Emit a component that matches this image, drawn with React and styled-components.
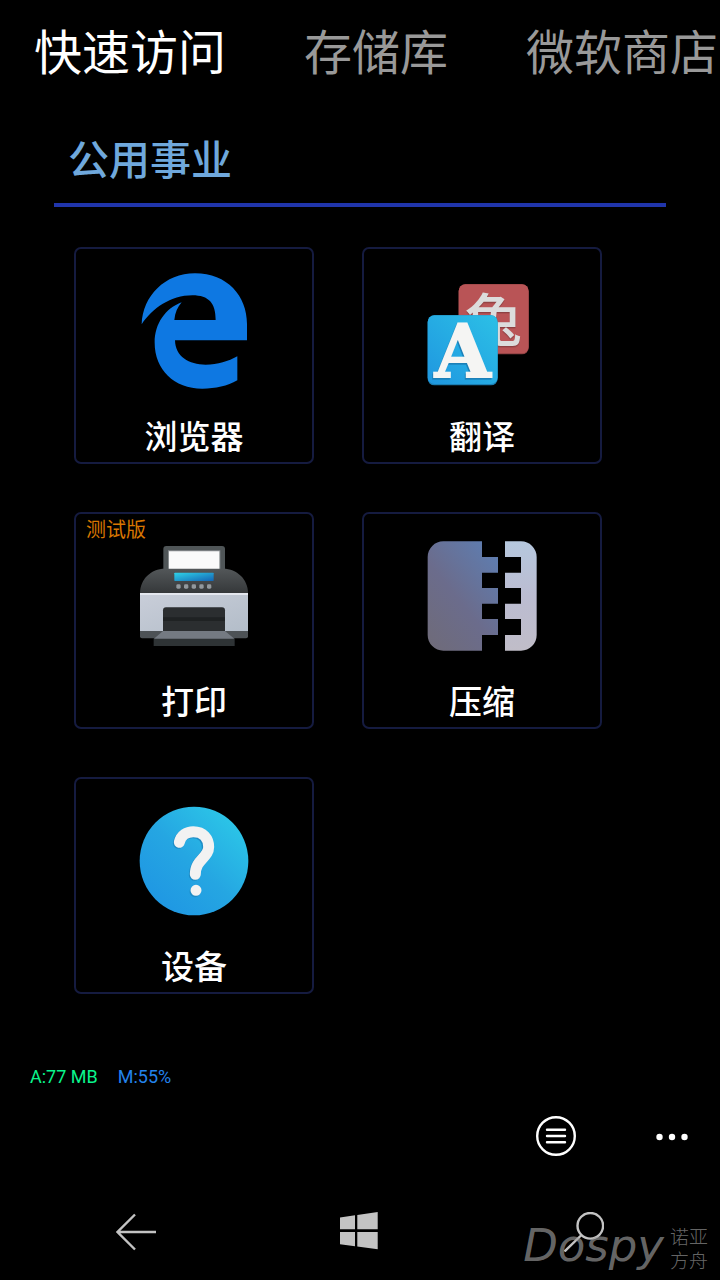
import React from "react";
import styled, { createGlobalStyle } from "styled-components";

const tabs = ["快速访问", "存储库", "微软商店"];

const tiles = [
  { label: "浏览器", icon: BrowserIcon },
  { label: "翻译", icon: TranslateIcon },
  { label: "打印", icon: PrinterIcon, badge: "测试版" },
  { label: "压缩", icon: ZipIcon },
  { label: "设备", icon: HelpIcon },
];

export default function App() {
  return (
    <Page>
      <GlobalStyle />
      <Tabs>
        {tabs.map((tab, i) => (
          <Tab key={tab} type="button" $active={i === 0}>
            {tab}
          </Tab>
        ))}
      </Tabs>
      <Section>
        <SectionTitle>公用事业</SectionTitle>
        <TileGrid>
          {tiles.map(({ label, icon: Icon, badge }) => (
            <Tile key={label} type="button">
              {badge && <Badge>{badge}</Badge>}
              <Icon />
              <TileLabel>{label}</TileLabel>
            </Tile>
          ))}
        </TileGrid>
      </Section>
      <Footer>
        <Stats>
          <Stat $color="#0af58c">A:77 MB</Stat>
          <Stat $color="#2383ec">M:55%</Stat>
        </Stats>
        <AppBar>
          <IconButton type="button" aria-label="菜单">
            <svg width="40" height="40" viewBox="0 0 40 40" fill="none" stroke="#fff">
              <circle cx="20" cy="20" r="18.8" strokeWidth="2.4" />
              <path d="M11 13.700H29M11 20H29M11 26.300H29" strokeWidth="2.4" strokeLinecap="round" />
            </svg>
          </IconButton>
          <IconButton type="button" aria-label="更多">
            <svg width="40" height="40" viewBox="0 0 40 40" fill="#fff">
              <circle cx="7.5" cy="21" r="3.2" />
              <circle cx="20" cy="21" r="3.2" />
              <circle cx="32.5" cy="21" r="3.2" />
            </svg>
          </IconButton>
        </AppBar>
        <NavBar>
          <IconButton type="button" aria-label="返回">
            <svg width="40" height="40" viewBox="0 0 40 40" fill="none" stroke="#c3c3c3" strokeWidth="2.4">
              <path d="M40 20H2M19 2.500L1.500 20L19 37.500" />
            </svg>
          </IconButton>
          <IconButton type="button" aria-label="开始">
            <svg width="40" height="40" viewBox="0 0 40 40" fill="#c3c3c3">
              <path d="M0 5.500L15 3.200V17.300H0ZM17.300 3L37.700 0V17.300H17.300ZM0 20H15V34.300L0 32.200ZM17.300 20H37.700V37.300L17.300 34.600Z" />
            </svg>
          </IconButton>
          <IconButton type="button" aria-label="搜索">
            <svg width="40" height="40" viewBox="0 0 40 40" fill="none" stroke="#c3c3c3" strokeWidth="2.400">
              <circle cx="26.300" cy="13.800" r="12.800" />
              <path d="M17.500 23L0.500 39.500" />
            </svg>
          </IconButton>
        </NavBar>
        <Watermark>
          <Brand>Dospy</Brand>
          <BrandSub>
            <span>诺亚</span>
            <span>方舟</span>
          </BrandSub>
        </Watermark>
      </Footer>
    </Page>
  );
}

// Tile icons share one 360 unit canvas
function BrowserIcon() {
  return (
    <TileIcon viewBox="210 81 360 360" aria-hidden="true">
      <path
        fill="#0e78e2"
        d="M233 253C236 168 303 100 393 100C490 100 549 168 549 252V301H333C334 350 375 374 425 374C462 374 493 364 520 349V421C490 438 455 446 415 446C330 446 272 388 272 308C272 250 305 205 353 187C341 201 333 218 331 240H455C455 190 435 166 385 166C320 166 265 205 233 253Z"
      />
    </TileIcon>
  );
}

function TranslateIcon() {
  return (
    <TileIcon viewBox="210 81 360 360" aria-hidden="true">
      <defs>
        <linearGradient id="trBlue" x1="0" y1="1" x2="1" y2="0">
          <stop offset="0" stopColor="#1f97e0" />
          <stop offset="1" stopColor="#2cc0e6" />
        </linearGradient>
      </defs>
      <rect x="320" y="133" width="210" height="210" rx="20" fill="#8e4143" />
      <rect x="320" y="133" width="210" height="207" rx="20" fill="#b95456" />
      <Hanzi x="424" y="303">兔</Hanzi>
      <rect x="227" y="226" width="210" height="210" rx="20" fill="#1b7fb4" />
      <rect x="227" y="226" width="210" height="206" rx="20" fill="url(#trBlue)" />
      <Latin x="332" y="410">A</Latin>
    </TileIcon>
  );
}

function PrinterIcon() {
  return (
    <TileIcon viewBox="210 81 360 360" aria-hidden="true">
      <defs>
        <linearGradient id="prTop" x1="0" y1="0" x2="0" y2="1">
          <stop offset="0" stopColor="#535759" />
          <stop offset="1" stopColor="#35383a" />
        </linearGradient>
        <linearGradient id="prBody" x1="0" y1="0" x2="1" y2="1">
          <stop offset="0" stopColor="#c9ced9" />
          <stop offset="1" stopColor="#b3bdc9" />
        </linearGradient>
        <linearGradient id="prScreen" x1="0" y1="0" x2="1" y2="1">
          <stop offset="0" stopColor="#2fd3e8" />
          <stop offset="1" stopColor="#1464b4" />
        </linearGradient>
      </defs>
      <path fill="#4f5557" d="M298 195V132Q298 123 307 123H474Q483 123 483 132V195Z" />
      <path fill="#888d8f" d="M312 136H469V192H312Z" />
      <path fill="#fafafa" d="M315 139H466V192H315Z" />
      <path fill="url(#prTop)" d="M228 264C228 222 262 191 302 191H478C518 191 552 222 552 264Z" />
      <rect x="331" y="203" width="118" height="25" rx="2" fill="url(#prScreen)" />
      {[344, 367, 390, 413, 436].map((x) => (
        <rect key={x} x={x - 7} y="238" width="13" height="13" rx="4" fill="#92989d" />
      ))}
      <path fill="url(#prBody)" d="M228 264H552V378H228Z" />
      <path fill="#e4e7ee" d="M228 264H552V270H228Z" />
      <path fill="#2b2e30" d="M297 378V316Q297 307 306 307H474Q483 307 483 316V378Z" />
      <path fill="#1f2223" d="M297 337H483V348H297Z" />
      <path fill="#4d5256" d="M228 378H552V394Q552 400 546 400H234Q228 400 228 394Z" />
      <path fill="#747a82" d="M297 378H483L512 402H269Z" />
      <path fill="#2e3335" d="M269 401H512V423H269Z" />
    </TileIcon>
  );
}

function ZipIcon() {
  return (
    <TileIcon viewBox="210 81 360 360" aria-hidden="true">
      <defs>
        <linearGradient id="zipLeft" x1="0" y1="1" x2="0.800" y2="0">
          <stop offset="0" stopColor="#6f6b78" />
          <stop offset="0.500" stopColor="#6b6c8c" />
          <stop offset="1" stopColor="#5f7cae" />
        </linearGradient>
        <linearGradient id="zipRight" x1="0" y1="1" x2="0" y2="0">
          <stop offset="0" stopColor="#c0bdc8" />
          <stop offset="0.500" stopColor="#bbbcd1" />
          <stop offset="1" stopColor="#b6c8de" />
        </linearGradient>
      </defs>
      <path
        fill="url(#zipLeft)"
        d="M390 109H274A47 47 0 0 0 227 156V390A47 47 0 0 0 274 437H390V390H438V342H390V296H438V249H390V203H438V156H390Z"
      />
      <path
        fill="url(#zipRight)"
        d="M459 109H507A47 47 0 0 1 554 156V390A47 47 0 0 1 507 437H459V390H507V342H459V296H507V249H459V203H507V156H459Z"
      />
    </TileIcon>
  );
}

function HelpIcon() {
  return (
    <TileIcon viewBox="210 81 360 360" aria-hidden="true">
      <defs>
        <linearGradient id="helpBlue" x1="0.150" y1="0.900" x2="0.850" y2="0.150">
          <stop offset="0" stopColor="#1f97e3" />
          <stop offset="0.500" stopColor="#25a6e2" />
          <stop offset="1" stopColor="#2bc3e7" />
        </linearGradient>
      </defs>
      <circle cx="390" cy="273" r="163" fill="url(#helpBlue)" />
      <g fill="none" strokeWidth="33" strokeLinecap="round">
        <path stroke="#1e8cc6" d="M343 220C348 198 366 188 385 188C415 188 430 209 430 234C430 266 391 271 391 316M393 365V365" />
        <path stroke="#f2f2f2" d="M346 217C351 195 369 185 388 185C418 185 434 206 434 231C434 263 394 268 394 313M396 361V361" />
      </g>
    </TileIcon>
  );
}

const GlobalStyle = createGlobalStyle`
  * {
    box-sizing: border-box;
  }
  body {
    margin: 0;
    background: #000;
    font-family: "Noto Sans CJK SC", sans-serif;
  }
  button {
    padding: 0;
    border: 0;
    background: none;
    color: inherit;
    font: inherit;
    cursor: pointer;
  }
`;
const Page = styled.main`
  display: flex;
  flex-direction: column;
  min-height: 100vh;
  overflow-x: clip;
  color: #fff;
`;
const Tabs = styled.nav`
  display: flex;
  gap: 78px;
  padding: 14px 0 0 34px;
`;
const Tab = styled.button`
  flex: none;
  font-size: 48px;
  line-height: 70px;
  color: ${({ $active }) => ($active ? "#fff" : "#999")};
`;
const Section = styled.section`
  padding: 43px 54px 0;
`;
const SectionTitle = styled.h2`
  margin: 0;
  padding: 0 14px 16px;
  border-bottom: 4px solid #2035ab;
  font-size: 41px;
  font-weight: 500;
  line-height: 60px;
  color: #6fa8dc;
`;
const TileGrid = styled.div`
  display: grid;
  grid-template-columns: repeat(auto-fill, 240px);
  gap: 48px;
  padding: 40px 0 0 20px;
`;
const Tile = styled.button`
  position: relative;
  display: flex;
  flex-direction: column;
  align-items: center;
  gap: 24px;
  && {
    padding: 18px 0 3px;
    border: 2px solid #151b40;
    border-radius: 7px;
  }
`;
const TileIcon = styled.svg`
  width: 120px;
  height: 120px;
  overflow: visible;
`;
const TileLabel = styled.span`
  font-size: 33px;
  font-weight: 500;
  line-height: 48px;
`;
const Badge = styled.span`
  position: absolute;
  top: 0;
  left: 10px;
  font-size: 20px;
  line-height: 30px;
  color: #d87600;
`;
const Hanzi = styled.text`
  font-family: "Noto Sans CJK SC", sans-serif;
  font-size: 172px;
  font-weight: 500;
  text-anchor: middle;
  fill: #dcdcdc;
  filter: drop-shadow(0 4px 0 #8e4143);
`;
const Latin = styled.text`
  font-family: "DejaVu Serif", serif;
  font-size: 216px;
  font-weight: 700;
  text-anchor: middle;
  fill: #f5f5f3;
  stroke: #f5f5f3;
  stroke-width: 6px;
  filter: drop-shadow(-3px 5px 0 #1b80b8);
`;
const Footer = styled.footer`
  position: relative;
  margin-top: auto;
`;
const Stats = styled.div`
  display: flex;
  gap: 20px;
  padding: 0 30px;
  font-family: Roboto, sans-serif;
  font-size: 18px;
  line-height: 24px;
`;
const Stat = styled.span`
  color: ${({ $color }) => $color};
`;
const AppBar = styled.div`
  display: flex;
  justify-content: flex-end;
  gap: 76px;
  padding: 27px 28px;
`;
const IconButton = styled.button`
  display: flex;
  width: 40px;
  height: 40px;
`;
const NavBar = styled.nav`
  display: grid;
  grid-template-columns: repeat(3, 1fr);
  justify-items: center;
  padding: 29px 24px 28px;
`;
const Watermark = styled.div`
  position: absolute;
  right: 12px;
  bottom: 8px;
  display: flex;
  align-items: center;
  gap: 6px;
  color: rgba(160, 160, 160, 0.650);
  pointer-events: none;
`;
const Brand = styled.span`
  padding-bottom: 4px;
  font-family: "DejaVu Sans", sans-serif;
  font-size: 45px;
  font-style: italic;
  font-weight: 200;
  line-height: 44px;
`;
const BrandSub = styled.span`
  display: flex;
  flex-direction: column;
  font-size: 19px;
  font-weight: 300;
  line-height: 24px;
`;
